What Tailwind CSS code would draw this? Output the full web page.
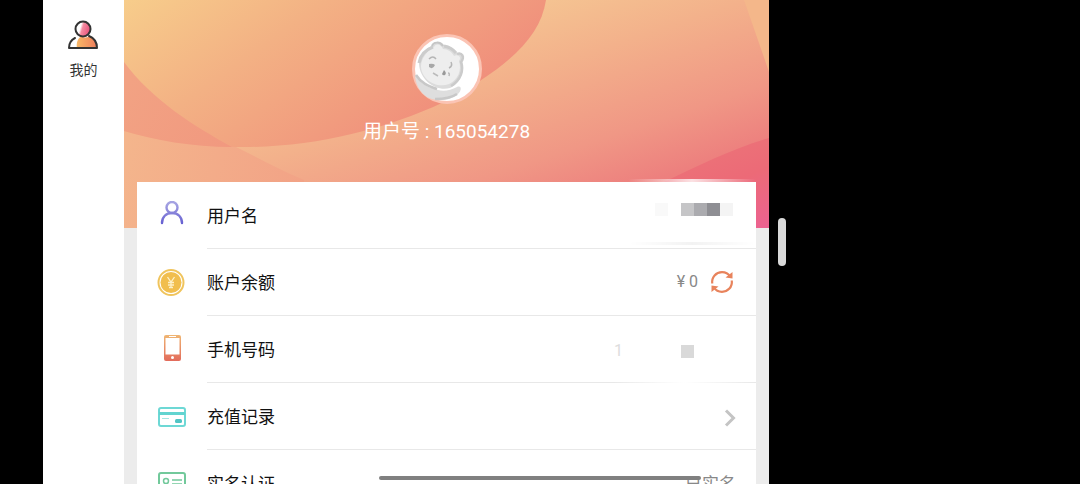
<!DOCTYPE html>
<html lang="zh-CN">
<head>
  <meta charset="UTF-8" />
  <meta name="viewport" content="width=device-width, initial-scale=1.0"/>
  <title>我的</title>
  <script src="https://cdn.jsdelivr.net/npm/@tailwindcss/browser@4"></script>
</head>
<body class="bg-black h-screen flex overflow-hidden pl-[43px] font-[Roboto,'Noto_Sans_CJK_SC',sans-serif]">

  <!-- Sidebar -->
  <nav class="w-[81px] shrink-0 bg-white pt-5">
    <a href="#" class="flex flex-col items-center gap-2.5 text-sm text-[#333]">
      <svg class="w-8 h-[30px]" viewBox="0 0 32 30" fill="none">
        <defs>
          <linearGradient id="head" x1="0" y1="0" x2="1" y2="0.3">
            <stop offset="0.4" stop-color="#fff"/>
            <stop offset="0.55" stop-color="#f58aa0"/>
            <stop offset="1" stop-color="#e8577f"/>
          </linearGradient>
          <linearGradient id="torso" x1="0" y1="0" x2="1" y2="0">
            <stop offset="0" stop-color="#f8b866"/>
            <stop offset="1" stop-color="#ee7d5c"/>
          </linearGradient>
        </defs>
        <path d="M9 28C8 23 10 18 13 16.500C17 18.500 21 17 22 16C27 18 29 22 29 28Z" fill="url(#torso)"/>
        <circle cx="15" cy="9" r="7.500" fill="url(#head)" stroke="#333" stroke-width="2"/>
        <path d="M7 18C3 20 1 23.500 1 28H29C29 22 26 18 21 16" stroke="#333" stroke-width="2" stroke-linejoin="round" stroke-linecap="round"/>
      </svg>
      <span>我的</span>
    </a>
  </nav>

  <!-- Main -->
  <main class="flex-1 bg-[#ececec] overflow-hidden">
    <header class="relative h-[228px] text-white">
      <svg class="absolute inset-0 w-full h-full" viewBox="0 0 645 228" preserveAspectRatio="none">
        <defs>
          <linearGradient id="base" gradientUnits="userSpaceOnUse" x1="430" y1="-10" x2="520" y2="260">
            <stop offset="0" stop-color="#f5c592"/>
            <stop offset="0.25" stop-color="#f3b18b"/>
            <stop offset="0.55" stop-color="#f09785"/>
            <stop offset="0.8" stop-color="#ec797c"/>
            <stop offset="1" stop-color="#ec6a82"/>
          </linearGradient>
          <linearGradient id="blob" gradientUnits="userSpaceOnUse" x1="0" y1="0" x2="170" y2="240">
            <stop offset="0" stop-color="#f7cd8b"/>
            <stop offset="0.4" stop-color="#f3b184"/>
            <stop offset="0.75" stop-color="#f19b7e"/>
            <stop offset="1" stop-color="#f08a7b"/>
          </linearGradient>
          <linearGradient id="low" gradientUnits="userSpaceOnUse" x1="0" y1="150" x2="180" y2="200">
            <stop offset="0" stop-color="#f4b58c"/>
            <stop offset="1" stop-color="#f2a286"/>
          </linearGradient>
          <linearGradient id="shade" gradientUnits="userSpaceOnUse" x1="0" y1="90" x2="110" y2="150">
            <stop offset="0" stop-color="#f2a283"/>
            <stop offset="1" stop-color="#f1987f"/>
          </linearGradient>
          <linearGradient id="corner" gradientUnits="userSpaceOnUse" x1="590" y1="150" x2="625" y2="235">
            <stop offset="0" stop-color="#ec7278"/>
            <stop offset="0.4" stop-color="#ec6a77"/>
            <stop offset="1" stop-color="#ec6291"/>
          </linearGradient>
        </defs>
        <rect width="645" height="228" fill="url(#base)"/>
        <path d="M0 62C30 102 75 130 112 147C135 158 155 170 180 180L180 228H0Z" fill="url(#low)"/>
        <path d="M0 0H422C416 40 380 69 320 102C260 130 190 147 120 147C75 147 30 140 0 131Z" fill="url(#blob)"/>
        <path d="M0 62C28 100 70 126 108 147C68 147 30 140 0 131Z" fill="url(#shade)"/>
        <path d="M620 0L645 72V0Z" fill="#f4b78a"/>
        <path d="M540 182C575 165 610 148 645 138V228H540Z" fill="url(#corner)"/>
      </svg>
      <div class="relative flex flex-col items-center pt-[34px]">
        <svg class="w-[70px] h-[70px]" viewBox="0 0 70 70" fill="none">
          <circle cx="35" cy="35" r="33.500" fill="#fff" stroke="#fbc4b4" stroke-width="3"/>
          <path d="M7 30C8 22 12 15 20 12C21 7 29 7 32 11C38 12 42 15 45 19C49 18 52 22 50 27C53 38 47 50 38 54C25 58 8 47 7 30Z" fill="#dcdcdc"/>
          <path d="M9 32C9 24 16 16 22 13C24 9 29 10 31 15C36 15 40 18 42 22C46 20 50 23 47 27C50 36 46 46 37 50C24 55 9 45 9 32Z" fill="#eee"/>
          <path d="M7 29C8 22 13 16 21 13M32 12C37 13 41 15 44 19" stroke="#ccc" stroke-width="3"/>
          <path d="M45 20C50 18 53 23 49 28C52 36 49 46 39 52" stroke="#cbcbcb" stroke-width="2.500"/>
          <path d="M20 12C21 8 28 7 31 12" stroke="#c5c5c5" stroke-width="2"/>
          <path d="M3 40C7 49 15 53 26 56C32 58 39 56 45 53C50 51 50 57 45 61C36 68 22 67 15 63C8 58 3 50 3 40Z" fill="#dedede"/>
          <path d="M4 41C9 49 16 52 25 55M23 65C31 65 39 64 45 60" stroke="#c8c8c8" stroke-width="2.500"/>
          <path d="M17 25Q21 21 24 25M37 34Q41 32 39 28" stroke="#b5b5b5" stroke-width="1.500"/>
          <path d="M17 30Q21 29 23 31Q21 36 17 33Z" fill="#a8a8a8"/>
          <path d="M32 36Q35 39 33 41Q31 42 30 40Z" fill="#999"/>
          <path d="M21 39L26 42M36 39Q38 39 37 42" stroke="#bbb" stroke-width="1.500"/>
        </svg>
        <h1 class="mt-[13px] text-[19px] leading-[30px]">用户号 : 165054278</h1>
      </div>
    </header>

    <!-- Account list -->
    <ul class="relative -mt-[46px] mx-[13px] bg-white text-[17px] text-[#111]">
      <li class="relative flex h-[67px]">
        <!-- Soft edges of the hidden name -->
        <div class="absolute -top-[3px] right-0 w-32 h-[3px] bg-linear-to-r from-transparent via-white/80 to-transparent"></div>
        <div class="absolute bottom-1 right-0 w-32 h-[3px] bg-linear-to-r from-transparent via-black/5 to-transparent"></div>
        <div class="w-[70px] flex items-center pl-5">
          <svg class="w-[30px] h-[30px]" viewBox="0 0 30 30" fill="none" stroke="url(#violet)" stroke-width="2.400" stroke-linecap="round">
            <defs>
              <linearGradient id="violet" gradientUnits="userSpaceOnUse" x1="0" y1="2" x2="0" y2="24">
                <stop offset="0" stop-color="#a5a3e2"/>
                <stop offset="1" stop-color="#625bd0"/>
              </linearGradient>
            </defs>
            <circle cx="15" cy="6.500" r="5.500"/>
            <path d="M5 22C5 16 9 12 15 12S25 16 25 22"/>
          </svg>
        </div>
        <div class="flex-1 flex items-center justify-between border-b border-[#e8e8e8] pt-1 pr-[23px]">
          <span>用户名</span>
          <div class="flex h-[13px] -mt-4">
            <div class="w-[13px] bg-[#f9f9f9] mr-[13px]"></div>
            <div class="w-[13px] bg-[#c5c5c7]"></div>
            <div class="w-[13px] bg-[#ababaf]"></div>
            <div class="w-[13px] bg-[#8e8e93]"></div>
            <div class="w-[13px] bg-[#f4f4f4]"></div>
          </div>
        </div>
      </li>
      <li class="flex h-[67px]">
        <div class="w-[70px] flex items-center pl-5">
          <svg class="w-7 h-7" viewBox="0 0 28 28" fill="none">
            <circle cx="14" cy="13.500" r="12.500" fill="#fff" stroke="#f0c45c" stroke-width="2"/>
            <circle cx="14" cy="13.500" r="10.500" fill="#f1be4e"/>
            <path d="M10.500 8L14 13L17.500 8M11 13.500H17M11 16H17M14 13V18.500M12 18.500H16" stroke="#fdf0c8" stroke-width="1.300"/>
          </svg>
        </div>
        <div class="flex-1 flex items-center justify-between border-b border-[#e8e8e8] pt-1 pr-[22px]">
          <span>账户余额</span>
          <div class="flex items-center gap-3 -mt-1">
            <span class="text-base text-[#888]">¥ 0</span>
            <button type="button" aria-label="刷新">
              <svg class="w-6 h-6" viewBox="0 0 24 24" fill="none" stroke="#e8835c" stroke-width="2.200">
                <path d="M2.200 13.500C1.500 7 6 2.200 12 2.200C16 2.200 18.500 4 20 6.500M21.800 10.500C22.500 17 18 21.800 12 21.800C8 21.800 5.500 20 4 17.500"/>
                <path d="M22.500 2V8.500L15.500 7.500ZM1.500 22V15.500L8.500 16.500Z" fill="#e8835c" stroke="none"/>
              </svg>
            </button>
          </div>
        </div>
      </li>
      <li class="relative flex h-[67px]">
        <div class="w-[70px] flex items-center pl-5">
          <svg class="w-[30px] h-[30px]" viewBox="0 0 30 30">
            <defs>
              <linearGradient id="phone" x1="0" y1="0" x2="0" y2="1">
                <stop offset="0" stop-color="#efb673"/>
                <stop offset="1" stop-color="#e26b5b"/>
              </linearGradient>
            </defs>
            <rect x="7" y="0" width="17" height="26" rx="2" fill="url(#phone)"/>
            <rect x="8.500" y="3" width="14" height="16.500" fill="#fff"/>
            <path d="M12 1.500H19" stroke="#fff"/>
            <circle cx="15.500" cy="22.500" r="1.500" fill="#fff"/>
          </svg>
        </div>
        <div class="flex-1 flex items-center justify-between border-b border-[#e8e8e8] pt-1 pr-[62px]">
          <span>手机号码</span>
          <div class="flex items-center gap-[58px]">
            <span class="text-base text-[#ddd]">1</span>
            <div class="w-[13px] h-[13px] bg-[#d9d9d9]"></div>
          </div>
        </div>
        <div class="absolute bottom-0 right-0 w-36 h-px bg-linear-to-r from-transparent via-white to-transparent"></div>
      </li>
      <li>
        <a href="#" class="flex h-[67px]">
          <div class="w-[70px] flex items-center pl-5">
            <svg class="w-[30px] h-[22px]" viewBox="0 0 30 22" fill="none">
              <rect x="2" y="2" width="26" height="18" rx="2" stroke="#6dd8d5" stroke-width="2"/>
              <path d="M2 7.500H28" stroke="#62d4d0" stroke-width="3"/>
              <path d="M5 12.500H12" stroke="#a5e6e3"/>
              <rect x="18" y="13" width="7" height="4" rx="1.500" fill="#51c4c4"/>
            </svg>
          </div>
          <div class="flex-1 flex items-center justify-between border-b border-[#e8e8e8] pt-1 pr-5">
            <span>充值记录</span>
            <svg class="w-3 h-[18px]" viewBox="0 0 12 18" fill="none" stroke="#c4c4c4" stroke-width="3">
              <path d="M2 1.500L9.500 9L2 16.500"/>
            </svg>
          </div>
        </a>
      </li>
      <li>
        <a href="#" class="flex h-[67px]">
          <div class="w-[70px] flex items-center pl-5">
            <svg class="w-[30px] h-6" viewBox="0 0 30 24" fill="none" stroke="#72c99b" stroke-width="2">
              <rect x="2" y="1" width="26" height="22" rx="2"/>
              <circle cx="9" cy="9" r="2.500" stroke-width="1.500"/>
              <path d="M5 16C5 13 7 12 9 12S13 13 13 16M15 8H25M15 12H25M15 17H25" stroke-width="1.500"/>
            </svg>
          </div>
          <div class="flex-1 flex items-center justify-between border-b border-[#e8e8e8] pt-1 pr-5">
            <span>实名认证</span>
            <span class="text-[#888]">已实名</span>
          </div>
        </a>
      </li>
    </ul>
  </main>

  <!-- Split-screen handle -->
  <aside class="w-[311px] shrink-0 flex items-center pl-[9px]">
    <div class="w-2 h-12 rounded-full bg-[#d9d9d9]"></div>
  </aside>

  <!-- Home indicator -->
  <div class="fixed bottom-1 left-1/2 -translate-x-1/2 w-[322px] h-1 rounded-full bg-[#808080]"></div>

</body>
</html>
